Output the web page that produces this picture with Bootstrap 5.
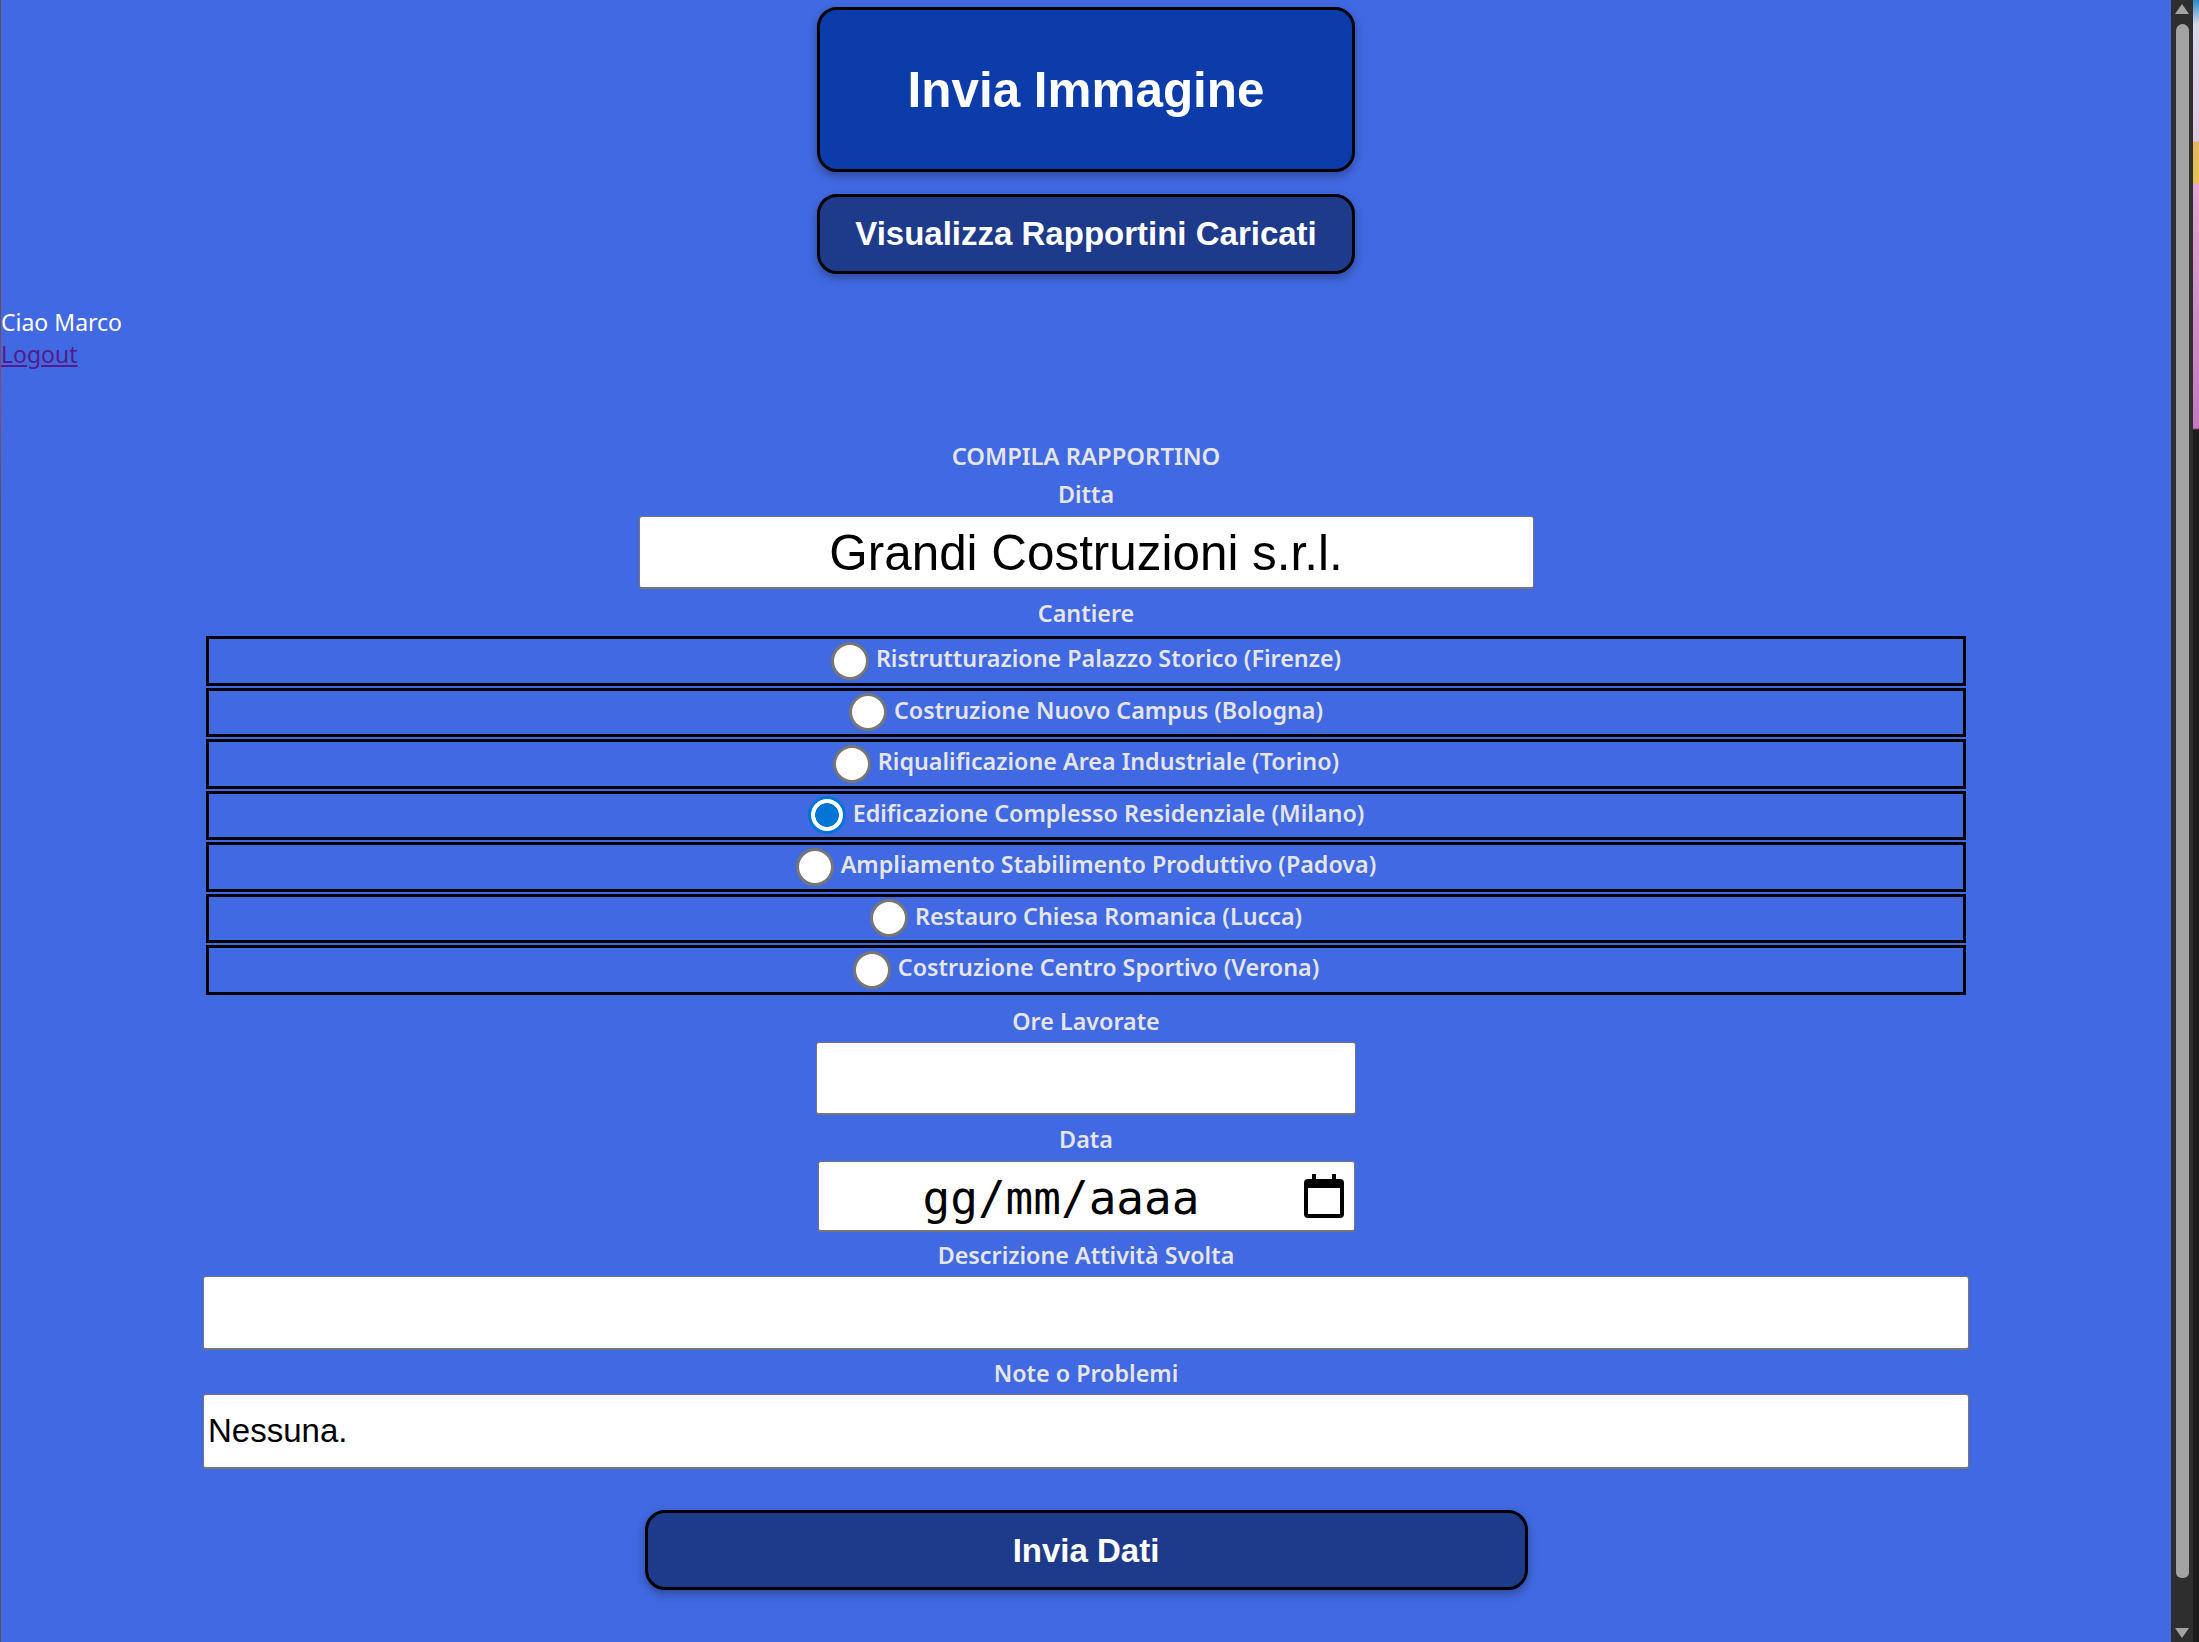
<!DOCTYPE html>
<html lang="it">
<head>
<meta charset="utf-8">
<title>Compila Rapportino</title>
<link href="https://cdn.jsdelivr.net/npm/bootstrap@5.3.0/dist/css/bootstrap.min.css" rel="stylesheet">
<style>
html,body{height:100%;overflow:hidden;margin:0}
body{background:#4169e1;font-family:"Noto Sans",sans-serif}
.page-shell{height:1642px}
.edge-left{width:1px;background:linear-gradient(#555 0,#6a4a55 300px,#8a4a80 400px,#555 500px,#555 100%)}
.page-main{width:2170px;background:#4169e1;color:#e5e5e5}
.big-btn{display:block;width:538px;border:3px solid #000;border-radius:20px;color:#fff;font-family:"Liberation Sans",Arial,sans-serif;font-weight:700;box-shadow:0 4px 10px rgba(0,0,0,.3);text-align:center;text-decoration:none}
.btn-upload{height:165px;margin-top:7px;background:#0b3ca9;font-size:49.4px;line-height:159px}
.btn-list{height:80px;margin-top:22px;background:#1e3a8a;font-size:33px;line-height:74px}
.greet{margin-top:32px;font-size:23px;line-height:32px;color:#fff;align-self:flex-start}
.greet a{color:#551a8b}
.report-form{margin-top:70px;width:100%}
.f-label{display:block;font-size:23.3px;line-height:32px;font-weight:600;color:#e5e5e5;text-align:center;margin:0}
.f-title{margin-bottom:6px;font-size:23.8px}
.f-input{display:block;background:#fff;border:1px solid #767676;border-bottom-width:2px;border-radius:3px;color:#000;font-family:"Liberation Sans",Arial,sans-serif;padding:0 4px;outline:0}
.i-ditta{width:895px;height:73px;font-size:49.4px;text-align:center;margin:6px 0 8px;padding-top:3px}
.site-list{width:1760px;margin:7px 0 10.5px;gap:2px}
.site-row{height:49.5px;border:3px solid #000;font-size:23.3px;font-weight:600;color:#e5e5e5;gap:7px}
.site-row input{appearance:none;width:38px;height:38px;margin:0;flex:none;background:#fff;border:3.5px solid #767676;border-radius:50%}
.site-row input:checked{border-color:#0075d4;background:radial-gradient(circle closest-side,#0075d4 0 72%,#fff 76%)}
.site-row span{position:relative;top:-2px}
.i-ore{width:540px;height:73px;margin:5px 0 8px}
.i-date{width:537px;height:71px;margin:6px 0 7px;font-family:"DejaVu Sans Mono",monospace;font-size:46px;padding:0 10px 0 104px}
.date-text{padding-top:5px}
.i-wide{width:1766px;height:74px;margin:5px 0 7px;font-size:33px}
.i-note{height:75px;margin-bottom:41px}
.btn-send{width:883px;height:80px;background:#1e3a8a;font-size:33px;line-height:74px}
.scroll-track{width:22px;background:#2e2e2e;padding:4px 0}
.scroll-thumb{width:13px;height:1554px;margin-top:10px;background:#a3a3a3;border-radius:7px 7px 6px 6px}
.arrow-up,.arrow-down{width:0;height:0;border-left:7.5px solid transparent;border-right:7.5px solid transparent}
.arrow-up{border-bottom:10px solid #a3a3a3}
.arrow-down{border-top:10px solid #a3a3a3;margin-top:auto}
.edge-right{width:6px;background:linear-gradient(#2a8ad0 0,#d8d8e8 24px,#e4c8e4 141px,#e2b860 142px,#e8c050 183px,#e4a8d8 184px,#c878c0 428px,#1c1c1c 430px,#1c1c1c 100%);border-left:2px solid transparent}
</style>
</head>
<body>
<div class="page-shell d-flex">
  <div class="edge-left flex-shrink-0"></div>
  <main class="page-main d-flex flex-column align-items-center flex-shrink-0">
    <a class="big-btn btn-upload" href="#">Invia Immagine</a>
    <a class="big-btn btn-list" href="#">Visualizza Rapportini Caricati</a>
    <div class="greet">
      <div>Ciao Marco</div>
      <a href="#">Logout</a>
    </div>
    <form class="report-form d-flex flex-column align-items-center">
      <div class="f-label f-title">COMPILA RAPPORTINO</div>
      <label class="f-label" for="ditta">Ditta</label>
      <input class="f-input i-ditta" id="ditta" type="text" value="Grandi Costruzioni s.r.l.">
      <div class="f-label">Cantiere</div>
      <div class="site-list d-flex flex-column">
        <label class="site-row d-flex align-items-center justify-content-center"><input type="radio" name="cantiere"><span>Ristrutturazione Palazzo Storico (Firenze)</span></label>
        <label class="site-row d-flex align-items-center justify-content-center"><input type="radio" name="cantiere"><span>Costruzione Nuovo Campus (Bologna)</span></label>
        <label class="site-row d-flex align-items-center justify-content-center"><input type="radio" name="cantiere"><span>Riqualificazione Area Industriale (Torino)</span></label>
        <label class="site-row d-flex align-items-center justify-content-center"><input type="radio" name="cantiere" checked><span>Edificazione Complesso Residenziale (Milano)</span></label>
        <label class="site-row d-flex align-items-center justify-content-center"><input type="radio" name="cantiere"><span>Ampliamento Stabilimento Produttivo (Padova)</span></label>
        <label class="site-row d-flex align-items-center justify-content-center"><input type="radio" name="cantiere"><span>Restauro Chiesa Romanica (Lucca)</span></label>
        <label class="site-row d-flex align-items-center justify-content-center"><input type="radio" name="cantiere"><span>Costruzione Centro Sportivo (Verona)</span></label>
      </div>
      <label class="f-label" for="ore">Ore Lavorate</label>
      <input class="f-input i-ore" id="ore" type="text">
      <div class="f-label">Data</div>
      <div class="f-input i-date d-flex align-items-center justify-content-between">
        <span class="date-text">gg/mm/aaaa</span>
        <svg width="40" height="44" viewBox="0 0 40 44" aria-hidden="true"><path d="M8 0h4v5h16V0h4v5h4a4 4 0 0 1 4 4v31a4 4 0 0 1-4 4H4a4 4 0 0 1-4-4V9a4 4 0 0 1 4-4h4z M4 14v26h32V14z" fill="#000" fill-rule="evenodd"/></svg>
      </div>
      <label class="f-label" for="descr">Descrizione Attività Svolta</label>
      <input class="f-input i-wide" id="descr" type="text">
      <label class="f-label" for="note">Note o Problemi</label>
      <input class="f-input i-wide i-note" id="note" type="text" value="Nessuna.">
      <button class="big-btn btn-send" type="button">Invia Dati</button>
    </form>
  </main>
  <div class="scroll-track d-flex flex-column align-items-center flex-shrink-0">
    <div class="arrow-up"></div>
    <div class="scroll-thumb"></div>
    <div class="arrow-down"></div>
  </div>
  <div class="edge-right flex-shrink-0"></div>
</div>
<script src="https://cdn.jsdelivr.net/npm/bootstrap@5.3.0/dist/js/bootstrap.bundle.min.js"></script>
</body>
</html>
